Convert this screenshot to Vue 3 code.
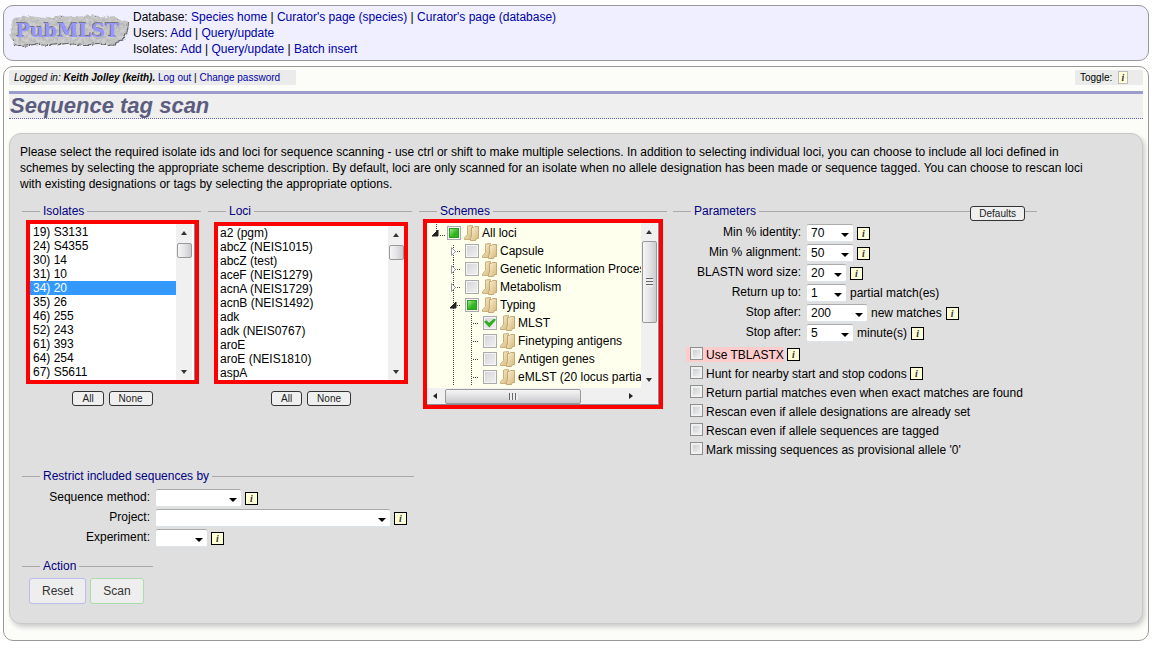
<script setup>
import { ref } from 'vue'

const isolates = ['19) S3131', '24) S4355', '30) 14', '31) 10', '34) 20', '35) 26', '46) 255', '52) 243', '61) 393', '64) 254', '67) S5611']
const loci = ['a2 (pgm)', 'abcZ (NEIS1015)', 'abcZ (test)', 'aceF (NEIS1279)', 'acnA (NEIS1729)', 'acnB (NEIS1492)', 'adk', 'adk (NEIS0767)', 'aroE', 'aroE (NEIS1810)', 'aspA']
const chosenIsolates = ref(['34) 20'])
const chosenLoci = ref([])

const tree = [
  { name: 'All loci', depth: 0, state: 'some', arrow: 'open' },
  { name: 'Capsule', depth: 1, state: 'none', arrow: 'closed' },
  { name: 'Genetic Information Processing', depth: 1, state: 'none', arrow: 'closed' },
  { name: 'Metabolism', depth: 1, state: 'none', arrow: 'closed' },
  { name: 'Typing', depth: 1, state: 'some', arrow: 'open' },
  { name: 'MLST', depth: 2, state: 'all', arrow: '' },
  { name: 'Finetyping antigens', depth: 2, state: 'none', arrow: '' },
  { name: 'Antigen genes', depth: 2, state: 'none', arrow: '' },
  { name: 'eMLST (20 locus partial genes)', depth: 2, state: 'none', arrow: '' }
]

const params = [
  { id: 'identity', label: 'Min % identity:', value: '70', size: 'm', after: '', info: true },
  { id: 'alignment', label: 'Min % alignment:', value: '50', size: 'm', after: '', info: true },
  { id: 'word', label: 'BLASTN word size:', value: '20', size: 's', after: '', info: true },
  { id: 'partial', label: 'Return up to:', value: '1', size: 's', after: 'partial match(es)', info: false },
  { id: 'matches', label: 'Stop after:', value: '200', size: 'l', after: 'new matches', info: true },
  { id: 'minutes', label: 'Stop after:', value: '5', size: 'm', after: 'minute(s)', info: true }
]

const options = [
  { id: 'tblastx', label: 'Use TBLASTX', info: true, hot: true },
  { id: 'hunt', label: 'Hunt for nearby start and stop codons', info: true },
  { id: 'exact', label: 'Return partial matches even when exact matches are found' },
  { id: 'designations', label: 'Rescan even if allele designations are already set' },
  { id: 'tagged', label: 'Rescan even if allele sequences are tagged' },
  { id: 'missing', label: "Mark missing sequences as provisional allele '0'" }
]

const filters = [
  { id: 'method', label: 'Sequence method:', size: 'xl' },
  { id: 'project', label: 'Project:', size: 'wide' },
  { id: 'experiment', label: 'Experiment:', size: 'ml' }
]
</script>

<template>
  <div class="page">
    <header class="banner">
      <svg class="logo" width="122" height="36" viewBox="0 0 122 36" role="img" aria-label="PubMLST">
        <defs>
          <filter id="stone" x="-5%" y="-10%" width="110%" height="120%" color-interpolation-filters="sRGB">
            <feTurbulence type="fractalNoise" baseFrequency="0.3" numOctaves="3" seed="4" result="n" />
            <feDisplacementMap in="SourceGraphic" in2="n" scale="4" xChannelSelector="R" yChannelSelector="G" result="edge" />
            <feColorMatrix in="n" type="matrix" values="0.2 0 0 0 0.67  0.2 0 0 0 0.67  0.2 0 0 0 0.67  0 0 0 0 1" result="grey" />
            <feComposite in="grey" in2="edge" operator="in" result="grain" />
            <feDropShadow in="grain" dx="1" dy="1" stdDeviation="0.4" flood-color="#444" flood-opacity="0.8" />
          </filter>
        </defs>
        <path filter="url(#stone)" fill="#c0c0c0" d="M4 5 L20 3 L36 5 L50 3 L66 4 L82 2 L96 4 L105 3 L110 7 L119 8 L118 17 L114 26 L108 28 L104 32 L88 30 L74 32 L58 30 L40 32 L24 31 L14 33 L5 31 L1 22 L2 14 Z" />
        <text x="7" y="24" class="logo-text">PubMLST</text>
      </svg>
      <nav class="links">
        <div>Database: <a href="#">Species home</a> | <a href="#">Curator's page (species)</a> | <a href="#">Curator's page (database)</a></div>
        <div>Users: <a href="#">Add</a> | <a href="#">Query/update</a></div>
        <div>Isolates: <a href="#">Add</a> | <a href="#">Query/update</a> | <a href="#">Batch insert</a></div>
      </nav>
    </header>

    <main class="content">
      <div class="status">
        <div class="login"><i>Logged in: <b>Keith Jolley (keith).</b></i> <a href="#">Log out</a> | <a href="#">Change password</a></div>
        <div class="toggle">Toggle: <button class="info pale" type="button" aria-label="Toggle help">i</button></div>
      </div>
      <h1>Sequence tag scan</h1>

      <form class="panel" @submit.prevent>
        <p>Please select the required isolate ids and loci for sequence scanning - use ctrl or shift to make multiple selections. In addition to selecting individual loci, you can choose to include all loci defined in schemes by selecting the appropriate scheme description. By default, loci are only scanned for an isolate when no allele designation has been made or sequence tagged. You can choose to rescan loci with existing designations or tags by selecting the appropriate options.</p>

        <div class="columns">
          <fieldset class="isolates">
            <legend><label for="isolates">Isolates</label></legend>
            <div class="frame">
              <select id="isolates" v-model="chosenIsolates" multiple size="11">
                <option v-for="o in isolates" :key="o">{{ o }}</option>
              </select>
              <div class="vbar"><i class="tri up"></i><i class="thumb short"></i><i class="tri down"></i></div>
            </div>
            <div class="pair"><button class="small" type="button">All</button><button class="small" type="button">None</button></div>
          </fieldset>

          <fieldset class="loci">
            <legend><label for="loci">Loci</label></legend>
            <div class="frame">
              <select id="loci" v-model="chosenLoci" multiple size="11">
                <option v-for="o in loci" :key="o">{{ o }}</option>
              </select>
              <div class="vbar"><i class="tri up"></i><i class="thumb short"></i><i class="tri down"></i></div>
            </div>
            <div class="pair"><button class="small" type="button">All</button><button class="small" type="button">None</button></div>
          </fieldset>

          <fieldset class="schemes">
            <legend>Schemes</legend>
            <div class="frame tree-frame">
              <div class="tree-main">
                <ul class="tree">
                  <li v-for="(n, i) in tree" :key="n.name" :class="'depth' + n.depth">
                    <svg v-if="n.depth === 2" class="guide" width="18" height="18" viewBox="0 0 18 18"><path d="M8.5 0 V18" class="dots" /></svg>
                    <svg class="branch" width="18" height="18" viewBox="0 0 18 18">
                      <path v-if="n.depth === 0" d="M9.500 0 V9 M13 11.500 H18" class="dots" />
                      <path v-else-if="n.depth === 1" :d="i === 1 ? 'M8.5 3 V18 M10 9.5 H16' : 'M8.5 0 V18 M10 9.5 H16'" class="dots" />
                      <path v-else d="M8.500 0 V18 M10 9.500 H16" class="dots" />
                      <path v-if="n.arrow === 'open'" d="M11 6 V12 H5 Z" fill="#222" stroke="#222" />
                      <path v-if="n.arrow === 'closed'" d="M6.500 5.500 L10.500 9.500 L6.500 13.500 Z" fill="#fff" stroke="#999" />
                    </svg>
                    <label>
                      <input type="checkbox" class="tick" :class="n.state" :checked="n.state === 'all'" :indeterminate="n.state === 'some'">
                      <svg class="folder" width="15" height="18" viewBox="0 0 15 18">
                        <defs>
                          <linearGradient id="fold" x1="0" x2="1" y1="0" y2="1"><stop offset="0" stop-color="#fbf0d4" /><stop offset="1" stop-color="#d6b878" /></linearGradient>
                        </defs>
                        <path d="M3.500 2 L8.500 1.500 V15.500 H0.500 V14 L3.500 10.500 Z" fill="url(#fold)" stroke="#c9b080" />
                        <path d="M7.500 3.500 H9.500 L10.500 2.500 H14.500 V14.500 H12.500 L11.500 16.500 H6.500 V14 L7.500 12 Z" fill="url(#fold)" stroke="#c3a873" />
                      </svg>
                      <span>{{ n.name }}</span>
                    </label>
                  </li>
                </ul>
                <div class="vbar"><i class="tri up"></i><i class="thumb tall"></i><i class="tri down"></i></div>
              </div>
              <div class="hbar"><i class="tri left"></i><i class="thumb flat"></i><i class="tri right"></i></div>
            </div>
          </fieldset>

          <fieldset class="params">
            <legend>Parameters</legend>
            <button class="small defaults" type="button">Defaults</button>
            <div class="rows">
              <template v-for="p in params" :key="p.id">
                <label :for="p.id">{{ p.label }}</label>
                <div class="field">
                  <span class="drop" :class="p.size"><select :id="p.id"><option>{{ p.value }}</option></select></span>
                  <span v-if="p.after">{{ p.after }}</span>
                  <button v-if="p.info" class="info" type="button" :aria-label="'Help: ' + p.label">i</button>
                </div>
              </template>
            </div>
            <ul class="checks">
              <li v-for="o in options" :key="o.id">
                <span :class="{ hot: o.hot }"><input :id="o.id" type="checkbox"><label :for="o.id">{{ o.label }}</label></span>
                <button v-if="o.info" class="info" type="button" :aria-label="'Help: ' + o.label">i</button>
              </li>
            </ul>
          </fieldset>
        </div>

        <fieldset class="restrict">
          <legend>Restrict included sequences by</legend>
          <div class="rows">
            <template v-for="f in filters" :key="f.id">
              <label :for="f.id">{{ f.label }}</label>
              <div class="field">
                <span class="drop" :class="f.size"><select :id="f.id"><option></option></select></span>
                <button class="info" type="button" :aria-label="'Help: ' + f.label">i</button>
              </div>
            </template>
          </div>
        </fieldset>

        <fieldset class="action">
          <legend>Action</legend>
          <div class="buttons">
            <button class="big reset" type="reset">Reset</button>
            <button class="big scan" type="submit">Scan</button>
          </div>
        </fieldset>
      </form>
    </main>
  </div>
</template>

<style>
body { margin: 0; background: #fff; }
</style>

<style scoped>
* { box-sizing: border-box; }
.page { padding: 5px 3px 10px; font: 12px/16px "Liberation Sans", Arial, sans-serif; color: #000; }
a { color: #0000a8; text-decoration: none; }
button, select, input { font: inherit; margin: 0; }
ul { list-style: none; margin: 0; padding: 0; }

.banner { display: flex; border: 1px solid #999; border-radius: 10px; background: #efefff; padding: 3px 5px; }
.logo { margin-top: 4px; flex: none; }
.logo-text { font: bold 19px "DejaVu Serif", serif; fill: #9696ff; filter: drop-shadow(-1px -1px 0 #77777c); }
.links { padding-left: 2px; }

.content { margin-top: 5px; border: 1px solid #999; border-radius: 10px; background: #fcfdf8; padding: 3px 5px 16px; }
.status { display: flex; justify-content: space-between; font-size: 10px; line-height: 15px; }
.login, .toggle { background: #ebebeb; padding: 0 5px; }
.login { padding-right: 16px; }
.toggle { padding-right: 15px; }
h1 { margin: 6px 0 14px; border-top: 3px solid #9c9ccc; border-bottom: 1px dotted #6666aa; background: #efefef; color: #5c5c80; font-size: 22px; line-height: 24px; font-style: italic; padding-left: 1px; }

.panel { border: 1px solid #c8c8c8; border-radius: 12px; background: #dfdfdf; box-shadow: 2px 3px 5px #ccc; padding: 10px 10px 19px; }
p { margin: 0 0 11px; padding-right: 27px; }
fieldset { margin: 0; border: 0; border-top: 1px solid #a9a9a9; padding: 0; min-width: 0; }
legend { margin-left: 18px; padding: 0 3px; color: #000080; }
.isolates legend, .schemes legend { margin-left: 14px; }
.loci legend { margin-left: 12px; }
.columns { display: flex; align-items: flex-start; padding: 0 0 9px 2px; }
.isolates { width: 179px; padding: 1px 2px 0 4px; }
.loci { width: 204px; margin-left: 7px; padding: 3px 4px 0 6px; }
.schemes { width: 248px; margin-left: 7px; padding: 0 4px; }
.params { width: 364px; margin-left: 6px; position: relative; }

.frame { border: 4px solid #f00; display: flex; background: #fff; height: 164px; box-shadow: inset -1px 0 #889; padding-right: 3px; }
.loci .frame { height: 162px; box-shadow: none; padding-right: 0; }
.frame select { flex: 1; min-width: 0; border: 0; outline: 0; overflow: hidden; padding: 1px 0; background: #fff; border-radius: 0; }
.loci .frame select { padding: 0; }
.frame option { font: 12px/14px "Liberation Sans", Arial, sans-serif; padding: 0 3px; min-height: 14px; height: 14px; color: #000; }
.loci .frame option { padding: 0 2px; }
.frame option:checked { background: #3399ff linear-gradient(#39f, #39f); color: #fff; -webkit-text-fill-color: #fff; }
.vbar { flex: none; width: 16px; display: flex; flex-direction: column; align-items: center; background: #f0f0f0; padding: 7px 0 6px; }
.tri { width: 0; height: 0; border: 3px solid transparent; flex: none; }
.up { border-bottom: 4px solid #333; border-top: 0; }
.down { border-top: 4px solid #333; border-bottom: 0; margin-top: auto; }
.left { border-right: 4px solid #222; border-left: 0; }
.right { border-left: 4px solid #222; border-right: 0; margin-left: auto; }
.thumb { display: flex; align-items: center; justify-content: center; border: 1px solid #999; border-radius: 2px; background: linear-gradient(90deg, #f5f5f5, #e4e4e6 50%, #cbcbd0); width: 15px; margin-top: 8px; flex: none; }
.short { height: 15px; }
.pair { display: flex; justify-content: center; gap: 5px; margin-top: 7px; }
.small { border: 1px solid #333; border-radius: 3px; background: #efefef; color: #222; font-size: 10px; line-height: 13px; padding: 0 9px; height: 15px; }
.defaults { position: absolute; right: 12px; top: -13px; padding: 0 8px; }

.tree-frame { flex-direction: column; height: 190px; padding: 0 2px 1px 0; box-shadow: inset -1px -1px #889; }
.tree-main { display: flex; flex: 1; min-height: 0; }
.tree { flex: 1; min-width: 0; overflow: hidden; background: #ffffee; padding-top: 1px; }
.tree li { display: flex; height: 18px; line-height: 18px; white-space: nowrap; }
.tree label { display: flex; align-items: center; }
.depth1, .depth2 { padding-left: 18px; }
.guide, .branch { flex: none; display: block; }
.dots { stroke: #444; stroke-dasharray: 1 1; fill: none; }
.tick { appearance: none; width: 14px; height: 14px; border: 1px solid #aaa; background: linear-gradient(135deg, #d4d4d8, #f2f2f2); box-shadow: inset 0 0 0 1px #f4f4f4; margin: 0 3px 0 2px; flex: none; display: grid; place-items: center; }
.some { background: #f4f4f4; }
.some::after { content: ""; width: 8px; height: 8px; border: 1px solid #2c9c1e; background: linear-gradient(135deg, #a0e890, #2db51c 60%); }
.all::after { content: ""; width: 12px; height: 9px; background: #2fae22; clip-path: polygon(0 35%, 20% 20%, 42% 48%, 85% 0, 100% 15%, 45% 100%); }
.folder { margin-right: 3px; }
.tall { height: 82px; margin-top: 7px; }
.tall::after { content: ""; width: 7px; height: 9px; background: repeating-linear-gradient(#666 0 1px, #eee 1px 3px); }
.hbar { display: flex; align-items: center; height: 16px; background: #f0f0f0; padding: 0 24px 0 6px; }
.flat { width: 136px; height: 15px; margin: 0 0 0 8px; background: linear-gradient(#f5f5f5, #e0e0e3 50%, #c8c8cc); }
.flat::after { content: ""; width: 9px; height: 7px; background: repeating-linear-gradient(90deg, #666 0 1px, #eee 1px 3px); }

.rows { display: grid; grid-template-columns: 128px 1fr; column-gap: 6px; row-gap: 2px; margin-top: 5px; }
.rows > label { text-align: right; line-height: 16px; }
.field { display: flex; align-items: center; gap: 4px; height: 18px; }
.drop { position: relative; display: block; height: 18px; }
.drop select { appearance: none; width: 100%; height: 18px; border: 0; border-top: 1px solid #aaa; border-bottom: 1px solid #dde3ea; border-radius: 2px; background: #fff; padding: 0 4px; line-height: 16px; display: block; color: #000; }
.drop::after { content: ""; position: absolute; right: 4px; top: 9px; border: 4px solid transparent; border-top-color: #000; border-bottom: 0; pointer-events: none; }
.s { width: 39px; } .m { width: 46px; } .l { width: 60px; } .xl { width: 85px; } .wide { width: 234px; } .ml { width: 51px; }
.info { display: inline-block; width: 13px; height: 13px; border: 1px solid #000; background: #ffffd8; padding: 0; font: italic bold 10px/11px "Liberation Serif", serif; color: #333; text-align: center; }
.info.pale { width: 10px; border-color: #bbb; margin-left: 3px; }

.checks { margin: 3px 0 0 13px; }
.checks li { display: flex; align-items: center; gap: 3px; height: 19px; white-space: nowrap; }
.checks span { display: flex; align-items: center; gap: 3px; padding-left: 4px; height: 15px; }
.checks input { appearance: none; width: 13px; height: 13px; border: 1px solid #8e8f8f; background: linear-gradient(135deg, #c4c8cc, #f6f6f6); box-shadow: inset 0 0 0 2px #f0f0f0; margin-bottom: 3px; }
.checks .hot { background: #ffcccc; }

.restrict { width: 392px; margin-left: 2px; }
.action { width: 131px; margin: 11px 0 0 2px; }
.buttons { display: flex; gap: 4px; padding: 4px 0 0 7px; }
.big { height: 26px; padding: 0 12px; border: 1px solid #bbe; border-radius: 3px; background: #eee; color: #333; }
.scan { border-color: #ada; }
</style>
